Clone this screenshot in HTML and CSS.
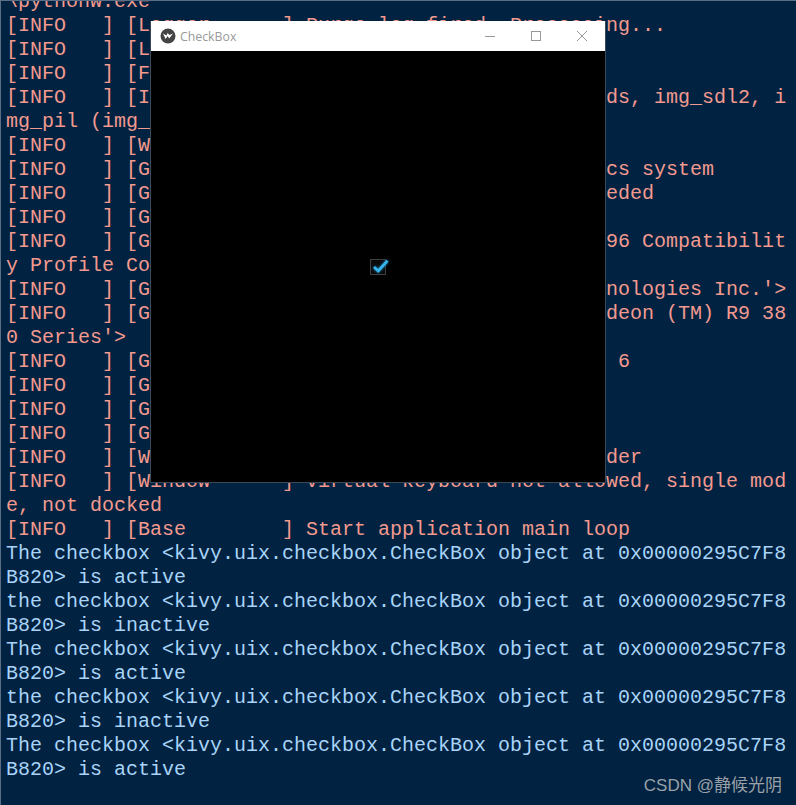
FILE: index.html
```html
<!DOCTYPE html>
<html lang="en">
<head>
<meta charset="utf-8">
<title>CheckBox</title>
<link rel="stylesheet" href="styles.css">
</head>
<body>
<main class="console">
<pre class="log log-info">\pythonw.exe
[INFO   ] [Logger      ] Purge log fired. Processing...
[INFO   ] [Logger      ] Purge finished!
[INFO   ] [Factory     ] 184 symbols loaded
[INFO   ] [Image       ] Providers: img_tex, img_dds, img_sdl2, i
mg_pil (img_ffpyplayer, img_gif ignored)
[INFO   ] [Window      ] Provider: sdl2
[INFO   ] [GL          ] Using the "OpenGL" graphics system
[INFO   ] [GL          ] GLEW initialization succeeded
[INFO   ] [GL          ] Backend used &lt;glew&gt;
[INFO   ] [GL          ] OpenGL version &lt;b'4.6.13596 Compatibilit
y Profile Context 25.20.15027.5007'&gt;
[INFO   ] [GL          ] OpenGL vendor &lt;b'ATI Technologies Inc.'&gt;
[INFO   ] [GL          ] OpenGL renderer &lt;b'AMD Radeon (TM) R9 38
0 Series'&gt;
[INFO   ] [GL          ] OpenGL parsed version: 4, 6
[INFO   ] [GL          ] Shading version &lt;b'4.60'&gt;
[INFO   ] [GL          ] Texture max size &lt;16384&gt;
[INFO   ] [GL          ] Texture max units &lt;32&gt;
[INFO   ] [Window      ] auto add sdl2 input provider
[INFO   ] [Window      ] virtual keyboard not allowed, single mod
e, not docked
[INFO   ] [Base        ] Start application main loop</pre>
<pre class="log log-out">The checkbox &lt;kivy.uix.checkbox.CheckBox object at 0x00000295C7F8
B820&gt; is active
the checkbox &lt;kivy.uix.checkbox.CheckBox object at 0x00000295C7F8
B820&gt; is inactive
The checkbox &lt;kivy.uix.checkbox.CheckBox object at 0x00000295C7F8
B820&gt; is active
the checkbox &lt;kivy.uix.checkbox.CheckBox object at 0x00000295C7F8
B820&gt; is inactive
The checkbox &lt;kivy.uix.checkbox.CheckBox object at 0x00000295C7F8
B820&gt; is active</pre>
</main>
<section class="window">
<header class="titlebar">
<svg class="app-icon" viewBox="0 0 16 16" aria-hidden="true">
<circle cx="8" cy="8" r="7.5" fill="#444"/>
<path d="M3 5.4 L5.6 11 L7.6 8 L9.2 10.6 L13 5.4 L9.4 7 L7.6 5 L6.4 7.4 Z" fill="#fff"/>
</svg>
<span class="title">CheckBox</span>
<div class="controls">
<svg class="control control-min" viewBox="0 0 46 30" aria-hidden="true"><path d="M18 15.5H28" stroke="#999" fill="none"/></svg>
<svg class="control control-max" viewBox="0 0 46 30" aria-hidden="true"><rect x="18.5" y="10.5" width="9" height="9" stroke="#999" fill="none"/></svg>
<svg class="control control-close" viewBox="0 0 46 30" aria-hidden="true"><path d="M18 10L28 20M28 10L18 20" stroke="#999" fill="none"/></svg>
</div>
</header>
<div class="canvas">
<svg class="checkbox" viewBox="0 0 20 20" aria-hidden="true">
<rect x="2.5" y="2.5" width="15" height="15" fill="#0a0a0a" stroke="#3d3f40"/>
<path class="check-glow" d="M6 10L10.2 14L19.5 3.8" stroke="#36b4ee" stroke-width="2.8" fill="none"/>
</svg>
</div>
</section>
<div class="watermark">CSDN @静候光阴</div>
</body>
</html>
```
FILE: styles.css
```css
html, body {
  margin: 0;
  padding: 0;
  height: 100%;
}
body {
  position: relative;
  overflow: hidden;
  background: #012241;
  box-sizing: border-box;
  border-top: 1px solid #5a6f85;
  border-left: 1px solid #5a6f85;
}
.console {
  margin-top: -11px;
  padding-left: 5px;
}
.log {
  margin: 0;
  font-family: "Liberation Mono", monospace;
  font-size: 20px;
  line-height: 24px;
  white-space: pre;
}
.log-info { color: #f29a8f; }
.log-out { color: #a8d4f8; }
.window {
  position: absolute;
  left: 149px;
  top: 20px;
  width: 454px;
  height: 461px;
  display: flex;
  flex-direction: column;
  border: 1px solid #3c4a58;
  border-top: 0;
}
.titlebar {
  height: 30px;
  background: #fff;
  display: flex;
  align-items: center;
}
.app-icon {
  width: 16px;
  height: 16px;
  margin-left: 9px;
  flex: none;
}
.title {
  margin-left: 4px;
  font-family: "Open Sans", "Liberation Sans", sans-serif;
  font-size: 12.3px;
  color: #999;
}
.controls {
  margin-left: auto;
  display: flex;
}
.control {
  width: 46px;
  height: 30px;
  display: block;
}
.canvas {
  flex: 1;
  background: #000;
  display: flex;
  align-items: center;
  justify-content: center;
}
.checkbox {
  width: 20px;
  height: 20px;
  display: block;
  overflow: visible;
}
.check-glow {
  filter: drop-shadow(0 0 1.5px #1f7fb0);
}
.watermark {
  position: absolute;
  right: 14px;
  top: 775px;
  font-family: "Liberation Sans", "Noto Sans CJK SC", sans-serif;
  font-size: 17px;
  line-height: 20px;
  color: #9aa1a8;
}
```
